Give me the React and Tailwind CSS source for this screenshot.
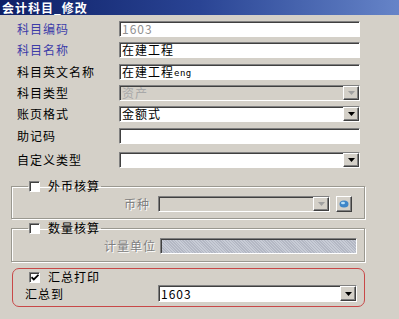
import React from 'react';

const sunken = 'border border-t-[#808080] border-l-[#808080] border-b-white border-r-white shadow-[inset_1px_1px_0_#404040]';
const raised = 'border border-t-white border-l-white border-b-[#404040] border-r-[#404040] shadow-[inset_-1px_-1px_0_#808080]';
const etched = 'border border-[#9a9890] shadow-[inset_1px_1px_0_#fff,1px_1px_0_#fff]';
const emboss = 'text-[#808080] [text-shadow:1px_1px_0_#fff]';

const Arrow = ({ disabled }) => (
    <div className={`w-[16px] h-full bg-[#d4d0c8] flex items-center justify-center ${raised}`}>
        <svg width="7" height="4" viewBox="0 0 7 4">
            <path d="M0 0h7L3.5 4z" fill={disabled ? '#a0a0a0' : '#000'} />
        </svg>
    </div>
);

const TextBox = ({ value, grey, className = '' }) => (
    <div className={`h-[16px] bg-white flex items-center px-[2px] text-[12px] tracking-[1px] leading-none ${sunken} ${className}`}>
        <span className={grey ? 'text-[#909090]' : 'text-black'}>{value}</span>
    </div>
);

const Select = ({ value, disabled, className = '' }) => (
    <div className={`h-[16px] flex items-center ${disabled ? 'bg-[#d4d0c8]' : 'bg-white'} ${sunken} ${className}`}>
        <span className={`flex-1 px-[2px] text-[12px] tracking-[1px] leading-none ${disabled ? 'text-[#a8a8a8]' : 'text-black'}`}>{value}</span>
        <Arrow disabled={disabled} />
    </div>
);

const Check = ({ checked }) => (
    <span className={`w-[11px] h-[11px] bg-white flex items-center justify-center ${sunken}`}>
        {checked && (
            <svg width="8" height="7" viewBox="0 0 8 7">
                <path d="M0.5 3.2l2.3 2.3L7.5 0.8" stroke="#000" strokeWidth="1.8" fill="none" />
            </svg>
        )}
    </span>
);

const Row = ({ label, blue, mt, children }) => (
    <div className={`flex items-center h-[16px] ${mt}`}>
        <span className={`w-[119px] pl-[17px] text-[12px] tracking-[1px] leading-none ${blue ? 'text-[#3c3ca8]' : 'text-black'}`}>{label}</span>
        {children}
    </div>
);

const App = () => {
    return (
        <div className="w-[399px] h-[319px] bg-[#d4d0c8] overflow-hidden font-['Noto_Sans_CJK_SC',sans-serif]">
            <div className="h-[15px] bg-gradient-to-r from-[#0e1f66] via-[#2a4494] to-[#6684c8] text-white font-bold text-[12px] leading-[15px] pl-[2px] tracking-[1px]">
                会计科目_修改
            </div>

            <Row label="科目编码" blue mt="mt-[6px]">
                <TextBox value="1603" grey className="w-[241px] bg-[#f4f4f4]" />
            </Row>
            <Row label="科目名称" blue mt="mt-[5px]">
                <TextBox value="在建工程" className="w-[241px]" />
            </Row>
            <Row label="科目英文名称" mt="mt-[6px]">
                <div className={`w-[241px] h-[16px] bg-white flex items-center px-[2px] text-[12px] tracking-[1px] leading-none ${sunken}`}>
                    <span className="text-black">在建工程</span>
                    <span className="text-black text-[9px] tracking-[0.5px] mt-[3px] font-['DejaVu_Sans_Mono',monospace]">eng</span>
                </div>
            </Row>
            <Row label="科目类型" mt="mt-[5px]">
                <Select value="资产" disabled className="w-[241px]" />
            </Row>
            <Row label="账页格式" mt="mt-[5px]">
                <Select value="金额式" className="w-[241px]" />
            </Row>
            <Row label="助记码" mt="mt-[6px]">
                <TextBox value="" className="w-[241px]" />
            </Row>
            <Row label="自定义类型" mt="mt-[8px]">
                <Select value="" className="w-[241px]" />
            </Row>

            <fieldset className={`ml-[11px] w-[354px] mt-[12px] pb-[6px] ${etched}`}>
                <legend className="ml-[16px] px-[1px] flex items-center gap-[8px] h-[12px]">
                    <Check />
                    <span className="text-[12px] tracking-[1px] leading-none text-black">外币核算</span>
                </legend>
                <div className="flex items-center h-[16px] mt-[4px]">
                    <span className={`w-[146px] text-right pr-[8px] text-[12px] tracking-[1px] leading-none ${emboss}`}>币种</span>
                    <Select value="" disabled className="w-[172px]" />
                    <div className={`ml-[6px] w-[16px] h-[16px] bg-[#d4d0c8] flex items-center justify-center ${raised}`}>
                        <svg width="10" height="8" viewBox="0 0 10 8">
                            <ellipse cx="5" cy="4" rx="4.5" ry="3.5" fill="#3f86c8" />
                            <ellipse cx="4" cy="3" rx="2" ry="1.3" fill="#b8e0f8" />
                        </svg>
                    </div>
                </div>
            </fieldset>

            <fieldset className={`ml-[11px] w-[354px] mt-[3px] pb-[7px] ${etched}`}>
                <legend className="ml-[16px] px-[1px] flex items-center gap-[8px] h-[12px]">
                    <Check />
                    <span className="text-[12px] tracking-[1px] leading-none text-black">数量核算</span>
                </legend>
                <div className="flex items-center h-[16px] mt-[4px]">
                    <span className={`w-[148px] text-right pr-[4px] text-[12px] tracking-[1px] leading-none ${emboss}`}>计量单位</span>
                    <div className={`w-[197px] h-[16px] bg-[repeating-linear-gradient(45deg,#b4b8c4_0px,#b4b8c4_1px,#c8ccd6_1px,#c8ccd6_2px)] ${sunken}`} />
                </div>
            </fieldset>

            <div className="ml-[12px] w-[353px] mt-[6px] h-[39px] border border-[#c84848] rounded-[7px] pt-[2px]">
                <div className="flex items-center gap-[8px] pl-[16px] h-[12px]">
                    <Check checked />
                    <span className="text-[12px] tracking-[1px] leading-none text-black">汇总打印</span>
                </div>
                <div className="flex items-center h-[17px] mt-[2px]">
                    <span className="w-[145px] pl-[12px] text-[12px] tracking-[1px] leading-none text-black">汇总到</span>
                    <Select value="1603" className="w-[199px] h-[17px]" />
                </div>
            </div>
        </div>
    );
};

export default App;
